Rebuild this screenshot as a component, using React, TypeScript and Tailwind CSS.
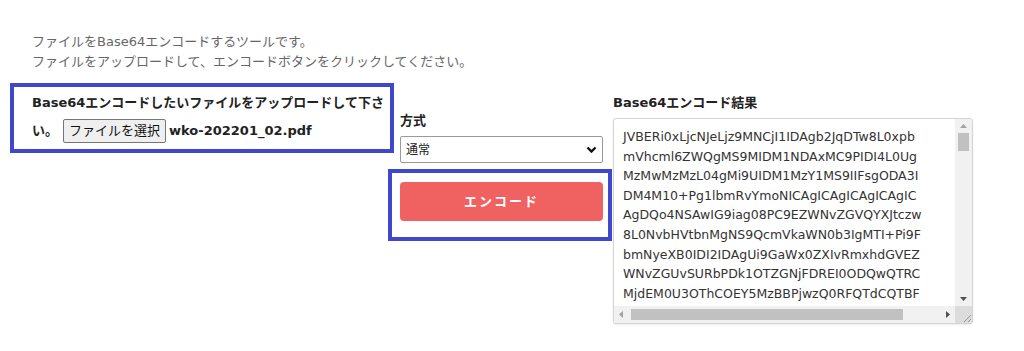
import React from "react";

const FONT = '"DejaVu Sans","Noto Sans CJK JP",sans-serif';

const LINES = [
  "JVBERi0xLjcNJeLjz9MNCjI1IDAgb2JqDTw8L0xpb",
  "mVhcml6ZWQgMS9MIDM1NDAxMC9PIDI4L0Ug",
  "MzMwMzMzL04gMi9UIDM1MzY1MS9IIFsgODA3I",
  "DM4M10+Pg1lbmRvYmoNICAgICAgICAgICAgIC",
  "AgDQo4NSAwIG9iag08PC9EZWNvZGVQYXJtczw",
  "8L0NvbHVtbnMgNS9QcmVkaWN0b3IgMTI+Pi9F",
  "bmNyeXB0IDI2IDAgUi9GaWx0ZXIvRmxhdGVEZ",
  "WNvZGUvSURbPDk1OTZGNjFDREI0ODQwQTRC",
  "MjdEM0U3OThCOEY5MzBBPjwzQ0RFQTdCQTBF",
];

export default function App() {
  return (
    <div
      className="min-h-[351px] w-[1024px] bg-white pt-[32px] pl-[32px]"
      style={{ fontFamily: FONT }}
    >
      <div className="text-[13px] leading-[20px] text-[#666]">
        <p>ファイルをBase64エンコードするツールです。</p>
        <p>ファイルをアップロードして、エンコードボタンをクリックしてください。</p>
      </div>

      <div className="mt-[17px] flex items-start">
        {/* left column */}
        <div className="relative w-[358px]">
          <div className="text-[13px] font-bold text-[#222]">
            <div className="leading-[28px]">Base64エンコードしたいファイルをアップロードして下さ</div>
            <div className="flex h-[28px] items-center">
              <span>い。</span>
              <span className="ml-[5px] flex h-[24px] items-center rounded-[2px] border border-[#767676] bg-[#efefef] px-[5px] text-[13px] font-normal text-[#111]">
                ファイルを選択
              </span>
              <span className="ml-[3px]">wko-202201_02.pdf</span>
            </div>
          </div>
          <div className="pointer-events-none absolute left-[-22px] top-[-6px] h-[70px] w-[384px] border-[4px] border-[#3f48cc]" />
        </div>

        {/* middle column */}
        <div className="relative ml-[10px] w-[203px] pt-[22px]">
          <div className="text-[13px] font-bold leading-[20px] text-[#222]">方式</div>
          <div className="mt-[5px] flex h-[27px] items-center justify-between rounded-[2px] border border-[#9a9a9a] bg-white pl-[5px] pr-[5px]">
            <span className="text-[12px] text-[#222]">通常</span>
            <svg width="11" height="7" viewBox="0 0 11 7">
              <path d="M1.5 1.5 L5.5 5.5 L9.5 1.5" fill="none" stroke="#111" strokeWidth="2.4" />
            </svg>
          </div>
          <div className="mt-[19px] flex h-[39px] items-center justify-center rounded-[4px] bg-[#f06262] text-[13px] font-bold tracking-[2px] text-white">
            エンコード
          </div>
          <div className="pointer-events-none absolute left-[-12px] top-[80px] h-[72px] w-[224px] border-[4px] border-[#3f48cc]" />
        </div>

        {/* right column */}
        <div className="ml-[10px] w-[360px] pt-[4px]">
          <div className="text-[13px] font-bold leading-[20px] text-[#222]">Base64エンコード結果</div>
          <div className="mt-[5px] flex h-[206px] flex-col overflow-hidden rounded-[3px] border border-[#d4d4d4] bg-white shadow-[0_1px_2px_rgba(0,0,0,0.08)]">
            <div className="flex min-h-0 flex-1">
              <div className="flex-1 overflow-hidden pl-[9px] pt-[8px] text-[12.5px] leading-[19.6px] whitespace-pre text-[#333]">
                {LINES.map((l, i) => (
                  <div key={i}>{l}</div>
                ))}
              </div>
              <div className="flex w-[17px] flex-col items-center bg-[#f1f1f1]">
                <div className="flex h-[13px] items-center justify-center">
                  <svg width="7" height="4" viewBox="0 0 7 4"><path d="M0 4 L3.5 0 L7 4 Z" fill="#a3a3a3" /></svg>
                </div>
                <div className="mt-[1px] h-[18px] w-[11px] bg-[#c1c1c1]" />
                <div className="flex-1" />
                <div className="flex h-[15px] items-center justify-center">
                  <svg width="7" height="4" viewBox="0 0 7 4"><path d="M0 0 L7 0 L3.5 4 Z" fill="#505050" /></svg>
                </div>
              </div>
            </div>
            <div className="flex h-[17px] bg-[#f1f1f1]">
              <div className="flex w-[14px] items-center justify-center">
                <svg width="4" height="7" viewBox="0 0 4 7"><path d="M4 0 L0 3.5 L4 7 Z" fill="#a3a3a3" /></svg>
              </div>
              <div className="mt-[3px] ml-[3px] h-[11px] w-[272px] bg-[#c1c1c1]" />
              <div className="flex-1" />
              <div className="flex w-[14px] items-center justify-center">
                <svg width="4" height="7" viewBox="0 0 4 7"><path d="M0 0 L4 3.5 L0 7 Z" fill="#505050" /></svg>
              </div>
              <div className="flex w-[17px] items-end justify-end bg-[#dcdcdc]">
                <svg width="12" height="12" viewBox="0 0 12 12">
                  <path d="M11 4 L4 11 M11 8 L8 11" stroke="#999" strokeWidth="1" />
                </svg>
              </div>
            </div>
          </div>
        </div>
      </div>
    </div>
  );
}
